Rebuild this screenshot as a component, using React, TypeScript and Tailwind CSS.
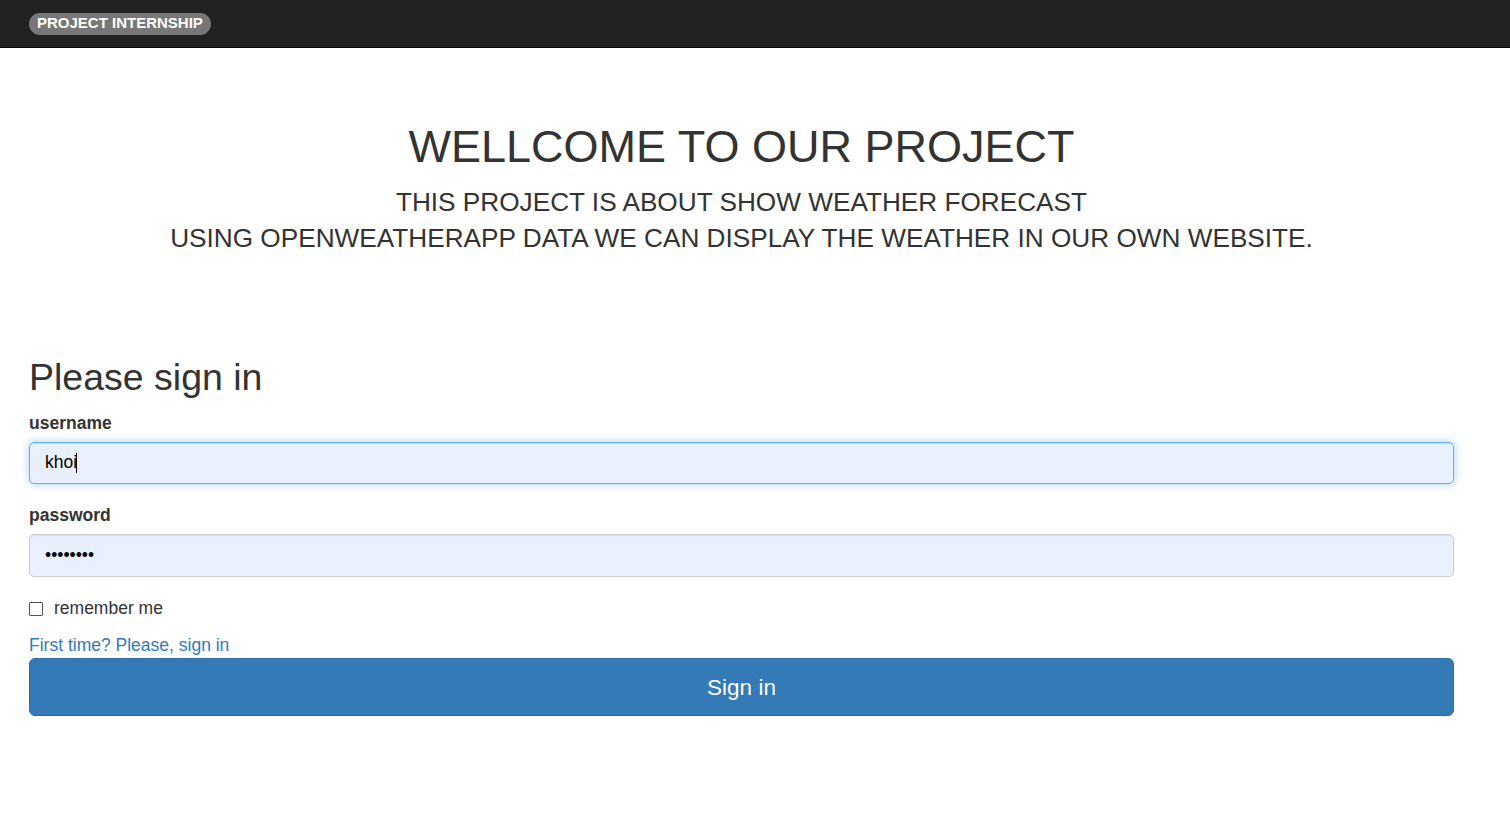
import { useState } from 'react'

export default function App() {
  const [username, setUsername] = useState('khoi')
  const [password, setPassword] = useState('12345678')
  const [remember, setRemember] = useState(false)

  return (
    <div className="min-h-screen bg-white font-['Liberation_Sans',Arial,sans-serif] text-[#333]">
      {/* top bar */}
      <nav className="flex h-[48px] items-center border-b border-[#080808] bg-[#222] pl-[29px]">
        <span className="flex h-[22px] items-center rounded-[11px] bg-[#777] px-[8px] text-[15px] font-bold text-white">
          PROJECT INTERNSHIP
        </span>
      </nav>

      <main className="ml-[29px] w-[1425px]">
        <h1 className="mt-[74px] text-center text-[45px] leading-[50px]">WELLCOME TO OUR PROJECT</h1>
        <p className="mt-[12px] text-center text-[26.2px] leading-[36px]">
          THIS PROJECT IS ABOUT SHOW WEATHER FORECAST
          <br />
          USING OPENWEATHERAPP DATA WE CAN DISPLAY THE WEATHER IN OUR OWN WEBSITE.
        </p>

        <h2 className="mt-[101px] text-[37.5px] leading-[41px]">Please sign in</h2>

        <form onSubmit={(e) => e.preventDefault()}>
          <label htmlFor="username" className="mt-[13px] block text-[17.5px] font-bold leading-[25px]">
            username
          </label>
          <div className="relative mt-[5.5px]">
            <input
              id="username"
              value={username}
              onChange={(e) => setUsername(e.target.value)}
              className="block h-[42px] w-full rounded-[5px] border border-[#66afe9] bg-[#e8f0fe] px-[15px] text-[17.5px] text-black shadow-[inset_0_1px_1px_rgba(0,0,0,0.075),0_0_8px_rgba(102,175,233,0.6)] outline-none"
            />
            {/* text caret */}
            <span className="pointer-events-none absolute left-[47px] top-[11px] h-[20px] w-px bg-black" />
          </div>

          <label htmlFor="password" className="mt-[19.5px] block text-[17.5px] font-bold leading-[25px]">
            password
          </label>
          <input
            id="password"
            type="password"
            value={password}
            onChange={(e) => setPassword(e.target.value)}
            className="mt-[5.5px] block h-[43px] w-full rounded-[5px] border border-[#ccc] bg-[#e8f0fe] px-[15px] text-[17.5px] text-black shadow-[inset_0_1px_1px_rgba(0,0,0,0.075)] outline-none"
          />

          <label className="mt-[19.7px] flex h-[25px] items-center text-[17.5px] leading-[25px]">
            <input
              type="checkbox"
              checked={remember}
              onChange={(e) => setRemember(e.target.checked)}
              className="m-0 h-[14px] w-[14px] appearance-none rounded-[1px] border border-[#555] bg-white"
            />
            <span className="ml-[11px]">remember me</span>
          </label>

          <a href="#" className="mt-[11.7px] block w-fit text-[17.5px] leading-[25px] text-[#337ab7]">
            First time? Please, sign in
          </a>

          <button
            type="submit"
            className="mt-[0.6px] block h-[58px] w-full rounded-[6px] border border-[#2e6da4] bg-[#337ab7] text-[22.5px] text-white"
          >
            Sign in
          </button>
        </form>
      </main>
    </div>
  )
}
